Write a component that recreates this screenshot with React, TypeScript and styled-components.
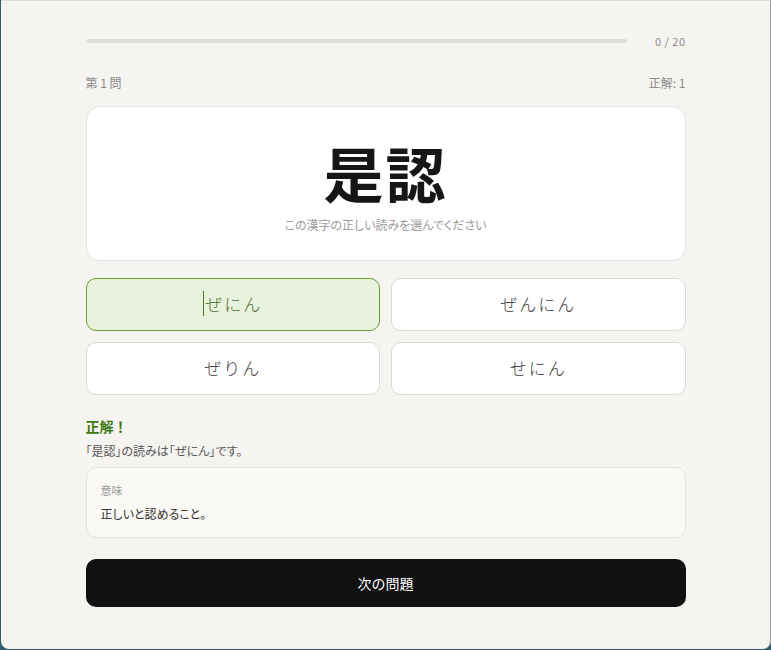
import React from "react";
import styled, { createGlobalStyle } from "styled-components";

const GlobalStyle = createGlobalStyle`
    html, body {
        margin: 0;
        padding: 0;
        background: #2f5e6f;
    }
    body {
        font-family: "Noto Sans CJK JP", "Noto Sans", sans-serif;
        font-feature-settings: "palt";
    }
`;

const Window = styled.div`
    box-sizing: border-box;
    margin-left: 1px;
    width: 770px;
    height: 649px;
    background: #f5f4f1;
    border-top: 1px solid #dcdfdc;
    border-right: 1px solid #a3a3a3;
    border-radius: 0 0 8px 8px;
    padding-top: 32px;
`;

const Column = styled.div`
    width: 600px;
    margin: 0 auto;
`;

const ProgressRow = styled.div`
    display: flex;
    align-items: center;
    height: 16px;
    gap: 28px;
`;

const Track = styled.div`
    flex: 1;
    height: 4px;
    border-radius: 2px;
    background: #dddcd9;
`;

const Fill = styled.div`
    height: 100%;
    border-radius: 2px;
    background: #6b9e2e;
`;

const Count = styled.span`
    font-size: 11px;
    color: #8a8a8a;
    letter-spacing: 0.5px;
`;

const MetaRow = styled.div`
    display: flex;
    justify-content: space-between;
    align-items: center;
    height: 16px;
    margin-top: 25px;
    font-size: 12px;
    color: #8a8a8a;
    font-feature-settings: normal;
`;

const KanjiCard = styled.div`
    margin-top: 16px;
    background: #fff;
    border: 1px solid #e6e4e0;
    border-radius: 14px;
    padding: 26px 0 26px;
    text-align: center;
`;

const Kanji = styled.div`
    font-size: 60px;
    line-height: 78px;
    font-weight: 700;
    color: #161616;
    letter-spacing: 2px;
`;

const Prompt = styled.div`
    margin-top: 5px;
    font-size: 12px;
    line-height: 18px;
    color: #9a9a9a;
`;

const Options = styled.div`
    margin-top: 17px;
    display: grid;
    grid-template-columns: 1fr 1fr;
    gap: 11px;
`;

const Option = styled.button<{ $correct?: boolean }>`
    height: 53px;
    padding: 0 0 3px;
    border-radius: 10px;
    border: 1px solid ${p => (p.$correct ? "#6b9e2e" : "#dcdad6")};
    background: ${p => (p.$correct ? "#e9f2df" : "#fff")};
    color: ${p => (p.$correct ? "#4d6e33" : "#3d3d3d")};
    font-family: "Noto Sans CJK JP", sans-serif;
    font-feature-settings: normal;
    font-size: 17px;
    font-weight: 300;
    letter-spacing: 2px;
    cursor: pointer;
    display: flex;
    align-items: center;
    justify-content: center;
`;

const Caret = styled.span`
    display: inline-block;
    width: 1px;
    height: 25px;
    background: #4d7a22;
    margin-right: 1px;
`;

const Verdict = styled.div`
    margin-top: 21px;
    font-size: 14px;
    line-height: 20px;
    font-weight: 700;
    color: #3f7a16;
    font-feature-settings: normal;
`;

const Explanation = styled.div`
    margin-top: 6px;
    font-size: 12px;
    line-height: 18px;
    color: #555;
`;

const MeaningBox = styled.div`
    margin-top: 7px;
    background: #faf9f6;
    border: 1px solid #e3e1dc;
    border-radius: 10px;
    padding: 14px 14px 14px;
`;

const MeaningLabel = styled.div`
    font-size: 11px;
    line-height: 16px;
    color: #999;
`;

const MeaningText = styled.div`
    margin-top: 7px;
    font-size: 12px;
    line-height: 18px;
    color: #333;
`;

const NextButton = styled.button`
    margin-top: 21px;
    width: 100%;
    height: 48px;
    border: none;
    border-radius: 10px;
    background: #111;
    color: #fff;
    font-family: "Noto Sans CJK JP", sans-serif;
    font-size: 14px;
    cursor: pointer;
`;

const choices = [
    { text: "ぜにん", correct: true },
    { text: "ぜんにん" },
    { text: "ぜりん" },
    { text: "せにん" },
];

export default function App() {
    const answered = 0;
    const total = 20;
    return (
        <>
            <GlobalStyle />
            <Window>
                <Column>
                    <ProgressRow>
                        <Track>
                            <Fill style={{ width: `${(answered / total) * 100}%` }} />
                        </Track>
                        <Count>
                            {answered} / {total}
                        </Count>
                    </ProgressRow>
                    <MetaRow>
                        <span>第 1 問</span>
                        <span>正解: 1</span>
                    </MetaRow>
                    <KanjiCard>
                        <Kanji>是認</Kanji>
                        <Prompt>この漢字の正しい読みを選んでください</Prompt>
                    </KanjiCard>
                    <Options>
                        {choices.map(c => (
                            <Option key={c.text} $correct={c.correct}>
                                {c.correct && <Caret />}
                                {c.text}
                            </Option>
                        ))}
                    </Options>
                    <Verdict>正解！</Verdict>
                    <Explanation>「是認」の読みは「ぜにん」です。</Explanation>
                    <MeaningBox>
                        <MeaningLabel>意味</MeaningLabel>
                        <MeaningText>正しいと認めること。</MeaningText>
                    </MeaningBox>
                    <NextButton>次の問題</NextButton>
                </Column>
            </Window>
        </>
    );
}
